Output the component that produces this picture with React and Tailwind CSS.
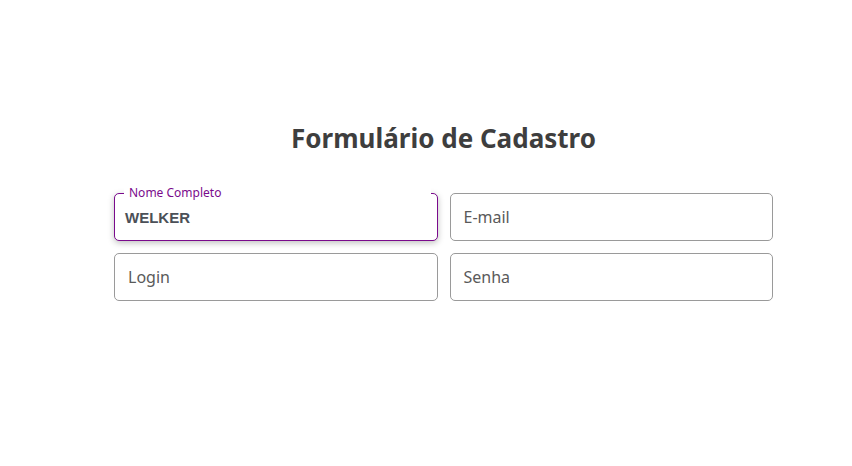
import React from 'react';

const font = { fontFamily: '"Noto Sans", "Open Sans", sans-serif' };

const Field = ({ placeholder }) => (
  <div className="h-12 rounded-[5px] border border-[#9a9a9a] bg-white flex items-center px-[13px]">
    <span className="text-[16px] text-[#5a5a5a]">{placeholder}</span>
  </div>
);

export default function App() {
  return (
    <div className="min-h-[466px] bg-white" style={font}>
      <div className="w-[659px] ml-[114px] pt-[119px]">
        <h1 className="text-center text-[26px] font-bold text-[#3e3e3e] leading-[38px]">
          Formulário de Cadastro
        </h1>
        <div className="mt-[36px] grid grid-cols-2 gap-x-3 gap-y-3">
          <div className="relative h-12 rounded-[5px] border border-[#7a0a8c] bg-white shadow-[0_2px_6px_rgba(0,0,0,0.25)] flex items-center px-[10px] pt-[2px]">
            <span className="absolute -top-[9px] left-[9px] right-[6px] bg-white px-[5px] text-[12px] leading-[16px] text-[#7a0a8c]">
              Nome Completo
            </span>
            <span className="text-[15px] font-bold text-[#4b5058]" style={{ fontFamily: '"Liberation Sans", Arial, sans-serif' }}>
              WELKER
            </span>
          </div>
          <Field placeholder="E-mail" />
          <Field placeholder="Login" />
          <Field placeholder="Senha" />
        </div>
      </div>
    </div>
  );
}
